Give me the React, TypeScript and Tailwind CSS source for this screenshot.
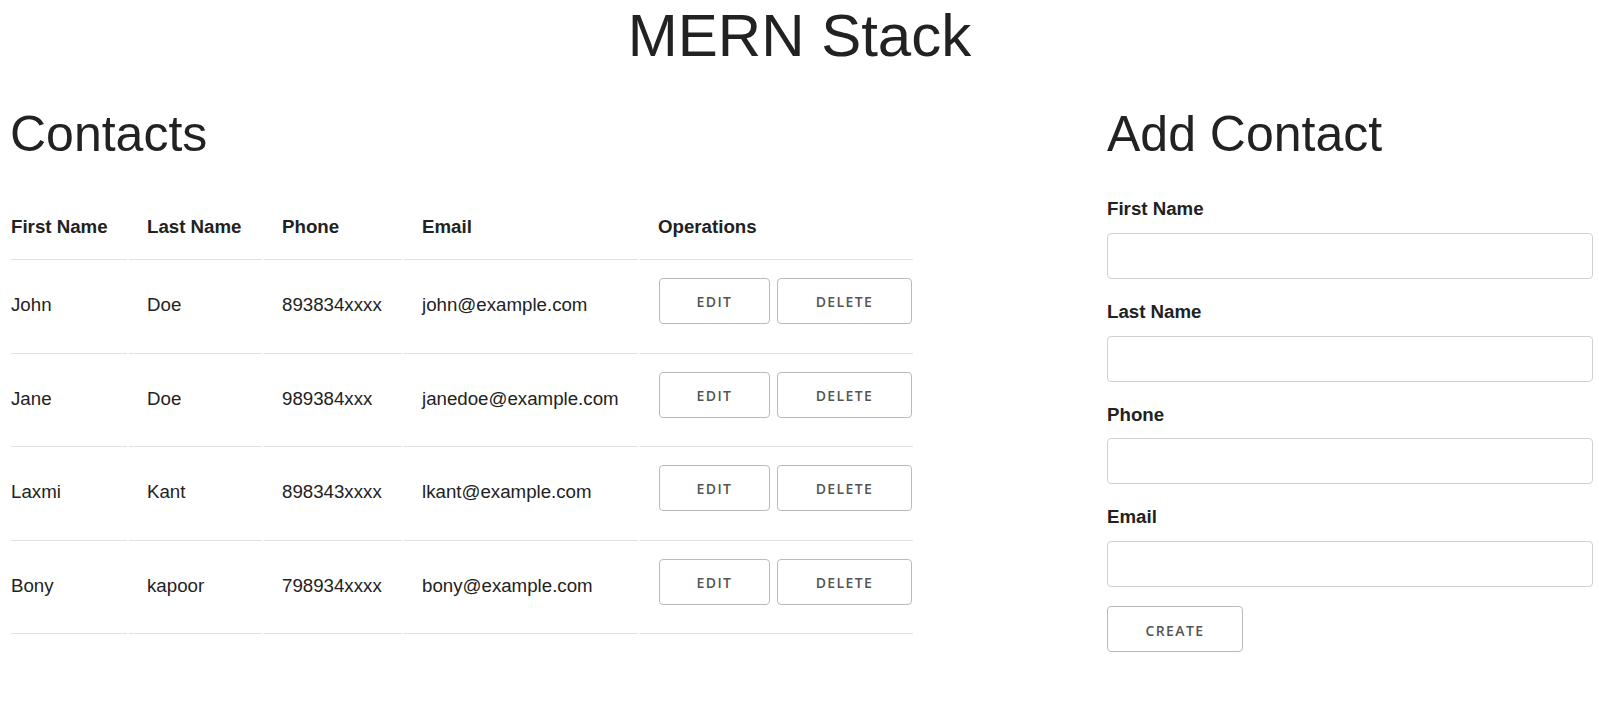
import React from "react";

/**
 * MERN Stack — список контактов и форма добавления.
 * Вёрстка в духе Skeleton CSS: тонкие линии таблицы, кнопки-контуры.
 */

type Contact = {
  first: string;
  last: string;
  phone: string;
  email: string;
};

const CONTACTS: Contact[] = [
  { first: "John", last: "Doe", phone: "893834xxxx", email: "john@example.com" },
  { first: "Jane", last: "Doe", phone: "989384xxx", email: "janedoe@example.com" },
  { first: "Laxmi", last: "Kant", phone: "898343xxxx", email: "lkant@example.com" },
  { first: "Bony", last: "kapoor", phone: "798934xxxx", email: "bony@example.com" },
];

const FIELDS = ["First Name", "Last Name", "Phone", "Email"];

const sans = "font-['Liberation_Sans',Arial,sans-serif]";
const btn =
  "flex items-center justify-center h-[46px] pt-[3px] rounded-[4px] border border-[#bbb] bg-transparent text-[14px] font-semibold tracking-[1.4px] uppercase text-[#555] font-['Open_Sans',sans-serif] cursor-pointer";
const cell = "align-middle pt-[16px] pb-[19.5px] border-b border-[#e1e1e1]";

function OutlineButton({ label, width }: { label: string; width: string }) {
  return <button className={`${btn} ${width}`}>{label}</button>;
}

export default function App() {
  return (
    <div className={`min-h-screen bg-white text-[#222] ${sans}`}>
      <h1 className="text-center text-[60px] leading-[1.2] font-normal">MERN Stack</h1>

      <div className="flex items-start justify-between pl-[9px] pr-[6px] mt-[31.5px]">
        {/* Левая колонка: таблица контактов */}
        <div className="w-[906px]">
          <h2 className="text-[50px] leading-[1.2] font-normal mb-[35px] pl-[1px]">Contacts</h2>
          <table className="w-[906px] table-fixed border-separate border-spacing-[2px] text-[18.7px] leading-[28.8px]">
            <colgroup>
              <col className="w-[116px]" />
              <col className="w-[133px]" />
              <col className="w-[138px]" />
              <col className="w-[234px]" />
              <col className="w-[273px]" />
            </colgroup>
            <thead>
              <tr>
                {["First Name", "Last Name", "Phone", "Email", "Operations"].map((h, i) => (
                  <th
                    key={h}
                    className={`text-left font-bold pt-[12px] pb-[18px] border-b border-[#e1e1e1] ${
                      i === 0 ? "pl-0" : "pl-[18px]"
                    }`}
                  >
                    {h}
                  </th>
                ))}
              </tr>
            </thead>
            <tbody>
              {CONTACTS.map((c) => (
                <tr key={c.email}>
                  <td className={`${cell} pl-0`}>{c.first}</td>
                  <td className={`${cell} pl-[18px]`}>{c.last}</td>
                  <td className={`${cell} pl-[18px]`}>{c.phone}</td>
                  <td className={`${cell} pl-[18px] whitespace-nowrap`}>{c.email}</td>
                  <td className={`${cell} pl-[19px] pr-0`}>
                    <div className="flex gap-[7px] mb-[9px]">
                      <OutlineButton label="Edit" width="w-[111px]" />
                      <OutlineButton label="Delete" width="w-[135px]" />
                    </div>
                  </td>
                </tr>
              ))}
            </tbody>
          </table>
        </div>

        {/* Правая колонка: форма */}
        <div className="w-[486px]">
          <h2 className="text-[50px] leading-[1.2] font-normal mb-[31.6px]">Add Contact</h2>
          <form onSubmit={(e) => e.preventDefault()}>
            {FIELDS.map((f) => (
              <div key={f}>
                <label className="block text-[18.7px] leading-[28.8px] font-bold mb-[9px]">{f}</label>
                <input
                  type="text"
                  className="block w-full h-[46px] mb-[19px] px-[10px] rounded-[4px] border border-[#d1d1d1] bg-white outline-none"
                />
              </div>
            ))}
            <OutlineButton label="Create" width="w-[136px]" />
          </form>
        </div>
      </div>
    </div>
  );
}
